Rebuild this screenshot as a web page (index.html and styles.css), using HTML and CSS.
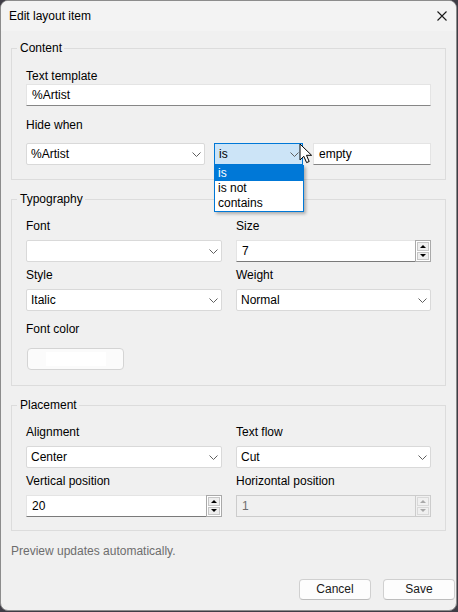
FILE: index.html
```html
<!DOCTYPE html>
<html lang="en">
<head>
<meta charset="utf-8">
<title>Edit layout item</title>
<link rel="stylesheet" href="styles.css">
</head>
<body>
<div class="window">
  <div class="titlebar">
    <span class="title">Edit layout item</span>
    <svg class="close" viewBox="0 0 10 10" width="10" height="10"><path d="M0.5 0.5 L9.5 9.5 M9.5 0.5 L0.5 9.5" stroke="#1a1a1a" stroke-width="1.1" fill="none"/></svg>
  </div>
  <div class="client">
    <fieldset class="group group-content">
      <legend>Content</legend>
      <div class="label">Text template</div>
      <div class="textbox">%Artist</div>
      <div class="label label-hide">Hide when</div>
      <div class="hide-row">
        <div class="combo combo-artist"><span>%Artist</span><svg class="chev" viewBox="0 0 9 5" width="9" height="5"><polyline points="0.5,0.5 4.5,4.5 8.5,0.5"/></svg></div>
        <div class="combo-wrap">
          <div class="combo combo-focus"><span>is</span><svg class="chev" viewBox="0 0 9 5" width="9" height="5"><polyline points="0.5,0.5 4.5,4.5 8.5,0.5"/></svg></div>
          <ul class="droplist">
            <li class="selected">is</li>
            <li>is not</li>
            <li>contains</li>
          </ul>
          <svg class="cursor" viewBox="0 0 14 21" width="14" height="21"><path d="M1 1 L1 17 L4.8 13.3 L7.6 19.6 L10.2 18.5 L7.5 12.3 L12.6 12.3 Z" fill="#fff" stroke="#000" stroke-width="1" stroke-linejoin="miter"/></svg>
        </div>
        <div class="textbox textbox-empty">empty</div>
      </div>
    </fieldset>

    <fieldset class="group group-typo">
      <legend>Typography</legend>
      <div class="grid">
        <div class="field">
          <div class="label">Font</div>
          <div class="combo"><span></span><svg class="chev" viewBox="0 0 9 5" width="9" height="5"><polyline points="0.5,0.5 4.5,4.5 8.5,0.5"/></svg></div>
        </div>
        <div class="field">
          <div class="label">Size</div>
          <div class="spin">
            <div class="spin-text">7</div>
            <div class="spin-btns"><span class="sb up"></span><span class="sb down"></span></div>
          </div>
        </div>
        <div class="field">
          <div class="label">Style</div>
          <div class="combo"><span>Italic</span><svg class="chev" viewBox="0 0 9 5" width="9" height="5"><polyline points="0.5,0.5 4.5,4.5 8.5,0.5"/></svg></div>
        </div>
        <div class="field">
          <div class="label">Weight</div>
          <div class="combo"><span>Normal</span><svg class="chev" viewBox="0 0 9 5" width="9" height="5"><polyline points="0.5,0.5 4.5,4.5 8.5,0.5"/></svg></div>
        </div>
      </div>
      <div class="label label-color">Font color</div>
      <div class="color-btn"><span class="swatch"></span></div>
    </fieldset>

    <fieldset class="group group-place">
      <legend>Placement</legend>
      <div class="grid">
        <div class="field">
          <div class="label">Alignment</div>
          <div class="combo"><span>Center</span><svg class="chev" viewBox="0 0 9 5" width="9" height="5"><polyline points="0.5,0.5 4.5,4.5 8.5,0.5"/></svg></div>
        </div>
        <div class="field">
          <div class="label">Text flow</div>
          <div class="combo"><span>Cut</span><svg class="chev" viewBox="0 0 9 5" width="9" height="5"><polyline points="0.5,0.5 4.5,4.5 8.5,0.5"/></svg></div>
        </div>
        <div class="field">
          <div class="label">Vertical position</div>
          <div class="spin">
            <div class="spin-text">20</div>
            <div class="spin-btns"><span class="sb up"></span><span class="sb down"></span></div>
          </div>
        </div>
        <div class="field">
          <div class="label">Horizontal position</div>
          <div class="spin disabled">
            <div class="spin-text">1</div>
            <div class="spin-btns"><span class="sb up"></span><span class="sb down"></span></div>
          </div>
        </div>
      </div>
    </fieldset>

    <div class="hint">Preview updates automatically.</div>

    <div class="buttons">
      <div class="btn">Cancel</div>
      <div class="btn">Save</div>
    </div>
  </div>
</div>
</body>
</html>
```

FILE: styles.css
```css
* { box-sizing: border-box; }
html, body { margin: 0; padding: 0; }
body {
  width: 458px;
  height: 612px;
  overflow: hidden;
  background: #3f3d46;
  font-family: "Liberation Sans", Arial, sans-serif;
  font-size: 12px;
  color: #000;
}
.window {
  width: 457px;
  height: 611px;
  background: #f0f0f0;
  border: 1px solid #8c8c8c;
  border-radius: 8px;
  overflow: hidden;
  display: flex;
  flex-direction: column;
}
.titlebar {
  height: 30px;
  flex: none;
  background: #f3f3f3;
  display: flex;
  align-items: center;
  justify-content: space-between;
  padding: 0 9px 0 8px;
}
.title { line-height: 16px; color: #000; }
.close { display: block; }

.client {
  flex: 1;
  display: flex;
  flex-direction: column;
  padding: 9px 1px 0 10px;
}
.group {
  margin: 0;
  width: 435px;
  min-width: 0;
  border: 1px solid #dcdcdc;
  padding: 11px 14px 14px;
}
.group legend {
  line-height: 16px;
  padding: 0 2px 0 3px;
  margin-left: -9px;
}
.group-content { padding-top: 12px; padding-bottom: 14px; position: relative; z-index: 2; }
.group-typo { margin-top: 11px; padding-bottom: 15px; }
.group-place { margin-top: 11px; padding-bottom: 13px; }

.label { line-height: 16px; height: 16px; white-space: nowrap; }
.label-hide { margin-top: 11px; }
.label-color { margin-top: 10px; }

.textbox {
  height: 22px;
  background: #fff;
  border: 1px solid #e4e4e4;
  border-bottom-color: #868686;
  padding: 0 5px;
  line-height: 20px;
  white-space: nowrap;
}
.hide-row {
  display: flex;
  margin-top: 10px;
}
.combo {
  height: 22px;
  background: #fff;
  border: 1px solid #d9d9d9;
  border-radius: 2px;
  display: flex;
  align-items: center;
  justify-content: space-between;
  padding: 0 3px 0 4px;
  white-space: nowrap;
}
.chev { display: block; flex: none; }
.chev polyline { fill: none; stroke: #5f5f5f; stroke-width: 1; }
.combo-artist { width: 179px; }
.combo-wrap {
  position: relative;
  width: 90px;
  margin-left: 9px;
}
.combo-focus {
  width: 89px;
  background: #cce4f7;
  border-color: #0078d7;
  border-radius: 0;
}
.droplist {
  position: absolute;
  left: 0;
  top: 22px;
  width: 90px;
  margin: 0;
  padding: 0;
  list-style: none;
  background: #fff;
  border: 1px solid #0078d7;
  box-shadow: 2px 2px 3px rgba(0, 0, 0, 0.28);
  z-index: 5;
}
.droplist li {
  height: 15px;
  line-height: 15px;
  padding-left: 3px;
}
.droplist li.selected { background: #0078d7; color: #fff; }
.cursor {
  position: absolute;
  left: 85px;
  top: 0;
  z-index: 6;
}
.textbox-empty { width: 118px; margin-left: 9px; }

.grid {
  display: grid;
  grid-template-columns: 196px 195px;
  column-gap: 14px;
  row-gap: 5px;
}
.field {
  display: flex;
  flex-direction: column;
  gap: 6px;
}

.spin { display: flex; height: 22px; }
.spin-text {
  flex: 1;
  background: #fff;
  border-top: 1px solid #e4e4e4;
  border-left: 1px solid #e4e4e4;
  border-bottom: 1px solid #7a7a7a;
  padding-left: 5px;
  line-height: 20px;
}
.spin-btns {
  width: 16px;
  flex: none;
  background: #fff;
  border: 1px solid #a9a9a9;
  padding: 1px;
  display: flex;
  flex-direction: column;
  gap: 1px;
}
.sb {
  flex: 1;
  background: #eeeeee;
  border: 1px solid #c6c6c6;
  display: flex;
  align-items: center;
  justify-content: center;
}
.sb::after {
  content: "";
  width: 0;
  height: 0;
  border-left: 3px solid transparent;
  border-right: 3px solid transparent;
}
.sb.up::after { border-bottom: 3px solid #000; }
.sb.down::after { border-top: 3px solid #000; }
.spin.disabled .spin-text {
  background: #f0f0f0;
  border: 1px solid #cccccc;
  border-right: none;
  color: #6d6d6d;
}
.spin.disabled .spin-btns { border-color: #cccccc; background: #f0f0f0; }
.spin.disabled .sb { border-color: #d9d9d9; background: #f0f0f0; }
.spin.disabled .sb.up::after { border-bottom-color: #a8a8a8; }
.spin.disabled .sb.down::after { border-top-color: #a8a8a8; }

.color-btn {
  width: 97px;
  height: 22px;
  margin-top: 11px;
  margin-left: 1px;
  background: #fbfbfb;
  border: 1px solid #d4d4d4;
  border-radius: 4px;
  display: flex;
  align-items: center;
  padding-left: 18px;
}
.swatch { width: 60px; height: 14px; background: #ffffff; }

.hint {
  margin-top: 12px;
  line-height: 16px;
  color: #6d6d6d;
}
.buttons {
  margin-top: 20px;
  display: flex;
  justify-content: flex-end;
  gap: 12px;
}
.btn {
  width: 72px;
  height: 21px;
  background: #fdfdfd;
  border: 1px solid #d0d0d0;
  border-bottom-color: #bdbdbd;
  border-radius: 4px;
  text-align: center;
  line-height: 19px;
  color: #1a1a1a;
}
```
